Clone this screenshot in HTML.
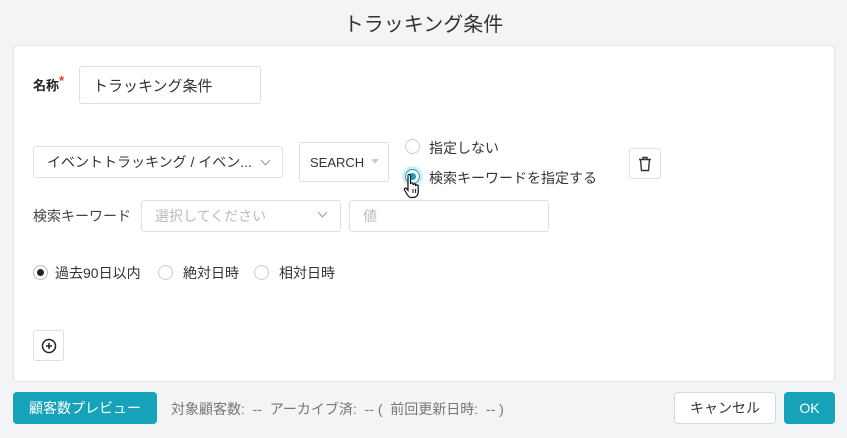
<!DOCTYPE html>
<html><head><meta charset="utf-8"><style>
*{box-sizing:border-box;margin:0;padding:0}
body{width:847px;height:438px;background:#f3f4f6;font-family:"Liberation Sans","Noto Sans CJK JP",sans-serif;color:#333;font-size:13px;position:relative;overflow:hidden}
.a{position:absolute}
.title{left:0;width:847px;top:8px;text-align:center;font-size:20px;color:#333}
.card{left:13px;top:45px;width:822px;height:337px;background:#fff;border:1px solid #e2e4e8;border-radius:4px}
.box{position:absolute;border:1px solid #dcdfe6;border-radius:3px;background:#fff;display:flex;align-items:center;padding-left:13px}
.ph{color:#bbb}
.radio{position:absolute;width:15px;height:15px;border:1px solid #ccc;border-radius:50%;background:#fff}
.chev{position:absolute;width:7px;height:7px;border-right:1.3px solid #999;border-bottom:1.3px solid #999;transform:rotate(45deg)}
.btn{position:absolute;border-radius:4px;display:flex;align-items:center;justify-content:center;font-size:14px}
</style></head><body>
<div class="a title">トラッキング条件</div>
<div class="a card"></div>
<div class="a" style="left:33px;top:75px;font-weight:bold;font-size:13px;color:#222">名称<span style="color:#e33;position:relative;top:-5px">*</span></div>
<div class="box" style="left:79px;top:66px;width:182px;height:38px;font-size:15px;color:#333">トラッキング条件</div>

<div class="box" style="left:33px;top:146px;width:250px;height:32px;font-size:14px">イベントトラッキング / イベン...</div>
<div class="chev" style="left:262px;top:157px"></div>
<div class="box" style="left:299px;top:142px;width:90px;height:40px;font-size:13px;padding-left:10px">SEARCH</div>
<div class="a" style="left:371px;top:159px;width:0;height:0;border-left:4px solid transparent;border-right:4px solid transparent;border-top:5px solid #ccc"></div>

<div class="radio" style="left:405px;top:139px"></div>
<div class="a" style="left:429px;top:138px;font-size:14px">指定しない</div>
<div class="radio" style="left:405px;top:169px;border-color:#16a2b8;box-shadow:0 0 0 3px #d4eff3"></div>
<div class="a" style="left:409px;top:173px;width:7px;height:7px;border-radius:50%;background:#16a2b8"></div>
<div class="a" style="left:429px;top:168px;font-size:14px">検索キーワードを指定する</div>
<svg class="a" style="left:403px;top:172px" width="18" height="28" viewBox="0 0 18 28"><path d="M5 3.5c0-1.5 2.5-1.5 2.5 0v8.5c.3-1.6 2.6-1.6 2.6 0v1c.3-1.5 2.5-1.5 2.5 0v1c.4-1.4 2.6-1.3 2.6.3v5.7c0 3-2 5.5-5 5.5H8.5c-2 0-3.3-1.2-4.3-3L1.6 18c-.8-1.5.9-2.6 2-1.4L5 18.3z" fill="#fff" stroke="#111" stroke-width="1.2"/><path d="M10 17v4M12.6 17v4" stroke="#111"/></svg>

<div class="box" style="left:629px;top:148px;width:32px;height:31px;padding:0;justify-content:center">
<svg width="14" height="16" viewBox="0 0 14 16" fill="none" stroke="#333" stroke-width="1.4"><path d="M1 3.5h12M5 3.5V1.5h4v2M2.5 3.5l1 11h7l1-11"/></svg></div>

<div class="a" style="left:33px;top:206px;font-size:14px;color:#444">検索キーワード</div>
<div class="box ph" style="left:141px;top:200px;width:200px;height:32px;font-size:14px">選択してください</div>
<div class="chev" style="left:319px;top:209px"></div>
<div class="box ph" style="left:349px;top:200px;width:200px;height:32px;font-size:14px">値</div>

<div class="radio" style="left:33px;top:265px;border-color:#bbb"></div>
<div class="a" style="left:37px;top:269px;width:7px;height:7px;border-radius:50%;background:#222"></div>
<div class="a" style="left:55px;top:263px;font-size:14px">過去90日以内</div>
<div class="radio" style="left:158px;top:265px"></div>
<div class="a" style="left:183px;top:263px;font-size:14px">絶対日時</div>
<div class="radio" style="left:254px;top:265px"></div>
<div class="a" style="left:279px;top:263px;font-size:14px">相対日時</div>

<div class="box" style="left:33px;top:330px;width:31px;height:31px;padding:0;justify-content:center">
<svg width="16" height="16" viewBox="0 0 16 16" fill="none" stroke="#222" stroke-width="1.5"><circle cx="8" cy="8" r="6.5"/><path d="M8 5v6M5 8h6"/></svg></div>

<div class="btn" style="left:13px;top:392px;width:144px;height:32px;background:#16a2b8;color:#fff">顧客数プレビュー</div>
<div class="a" style="left:171px;top:399px;font-size:14px;color:#777">対象顧客数:&nbsp; --&nbsp; アーカイブ済:&nbsp; -- (&nbsp; 前回更新日時:&nbsp; -- )</div>
<div class="btn" style="left:674px;top:392px;width:102px;height:32px;background:#fff;border:1px solid #d6d9de;color:#333">キャンセル</div>
<div class="btn" style="left:784px;top:392px;width:51px;height:32px;background:#16a2b8;color:#fff">OK</div>
</body></html>
